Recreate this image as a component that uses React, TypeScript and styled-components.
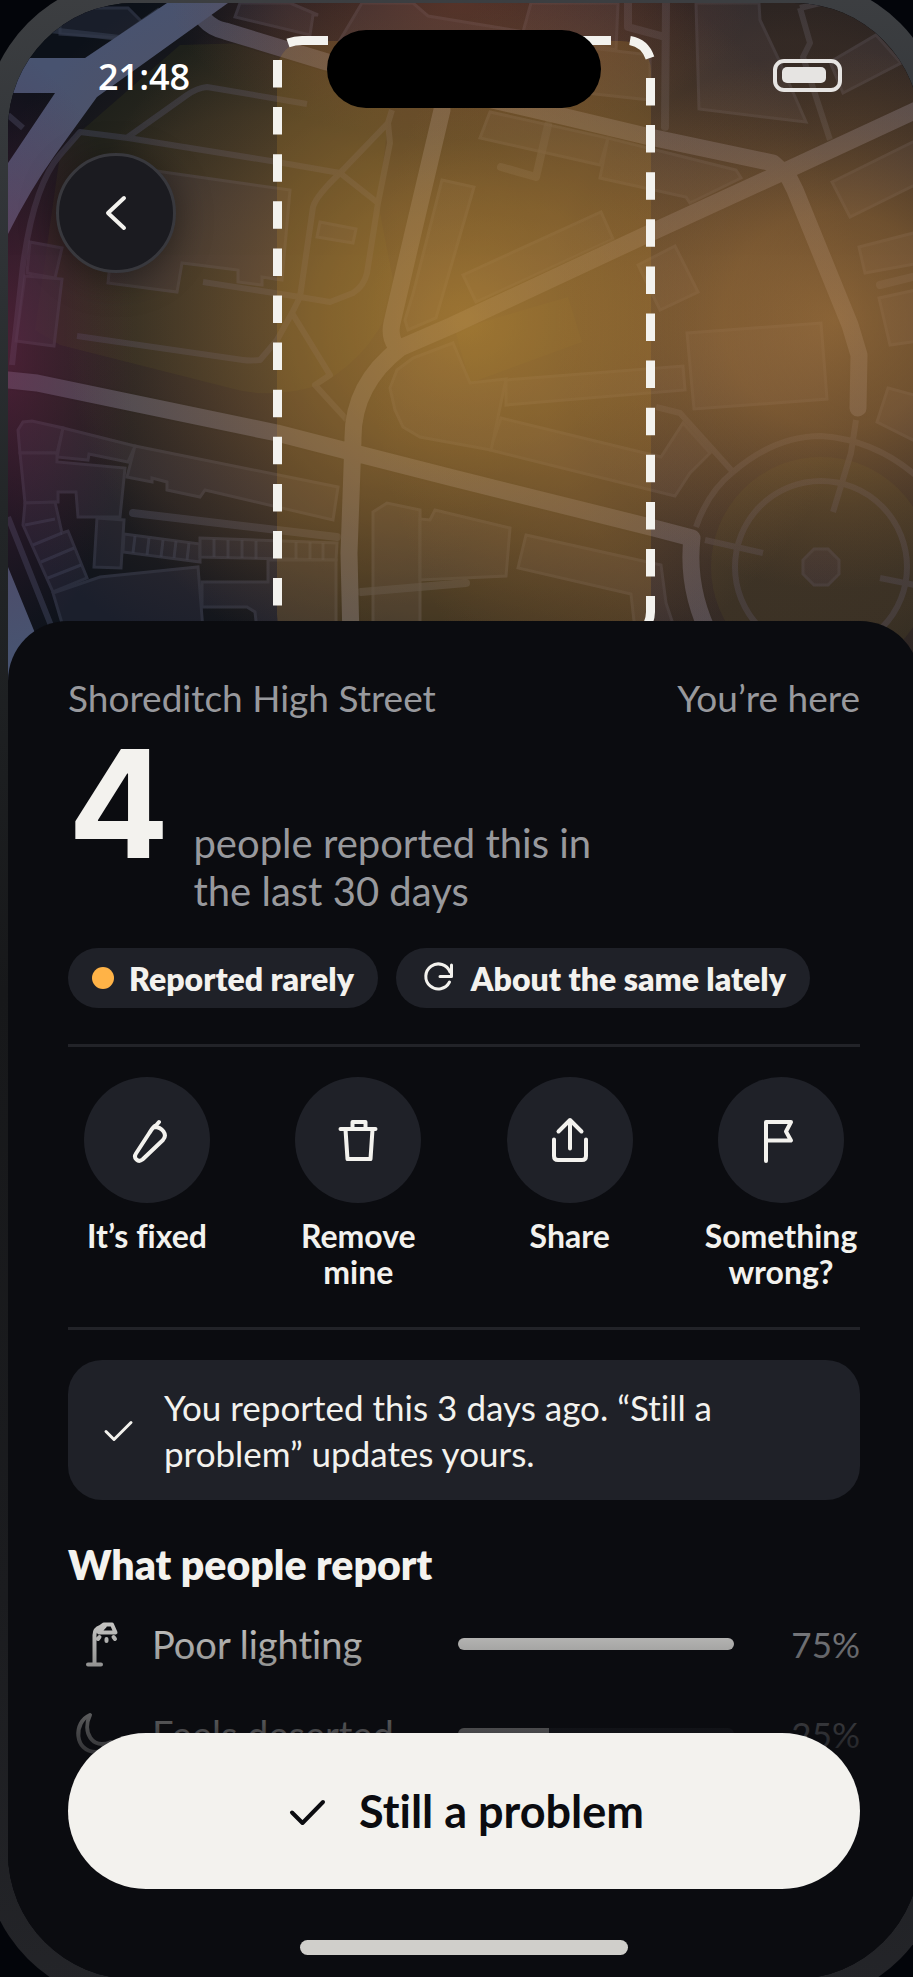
import React from "react";
import styled, { createGlobalStyle } from "styled-components";

const GlobalStyle = createGlobalStyle`
  *, *::before, *::after { box-sizing: border-box; }
  body { margin: 0; background: #03050a; }
  button { font: inherit; color: inherit; border: 0; padding: 0; background: none; cursor: pointer; }
  h1, h2, p, ul { margin: 0; padding: 0; }
`;

const ink = "#f3f2ee";
const muted = "#98999d";
const panel = "#1f2128";
const ground = "#0b0c10";

const Page = styled.div`
  display: flex;
  flex-direction: column;
  min-height: 100vh;
  overflow: hidden;
  color: ${ink};
  font-family: Lato, "Open Sans", sans-serif;
  font-variant-ligatures: none;
`;

const Phone = styled.div`
  flex: 1;
  display: flex;
  margin: -21px -31px -26px -16px;
  padding: 24px;
  border-radius: 150px;
  background: linear-gradient(180deg, #3d3f42 0, #2d3134 15%, #222527 27%, #17181a 50%, #1b1c1f 80%, #242529 100%);
`;

const Screen = styled.main`
  position: relative;
  flex: 1;
  display: flex;
  flex-direction: column;
  min-width: 0;
  overflow: hidden;
  border-radius: 126px;
  background: ${ground};
`;

const MapArea = styled.div`
  height: 690px;
  margin-bottom: -72px;
  svg { display: block; width: 100%; height: 100%; }
`;

const StatusBar = styled.header`
  position: absolute;
  top: 27px;
  left: 0;
  right: 0;
  display: grid;
  grid-template-columns: 1fr 274px 1fr;
  align-items: center;
  height: 78px;
`;

const Clock = styled.time`
  padding-left: 90px;
  padding-top: 16px;
  color: #fff;
  font-family: "Open Sans", sans-serif;
  font-size: 36px;
  font-weight: 600;
  line-height: 52px;
`;

const Island = styled.div`
  height: 78px;
  border-radius: 39px;
  background: #000;
`;

const Battery = styled.div`
  justify-self: end;
  width: 69px;
  height: 33px;
  margin-right: 78px;
  margin-top: 12px;
  padding: 4px 5px;
  border: 4px solid #e6e4e2;
  border-radius: 11px;
`;

const Charge = styled.div`
  width: 44px;
  height: 16px;
  border-radius: 5px;
  background: #e6e4e2;
`;

const BackButton = styled.button`
  position: absolute;
  top: 150px;
  left: 48px;
  display: grid;
  place-items: center;
  width: 120px;
  height: 120px;
  border: 3px solid #38383d;
  border-radius: 50%;
  background: #1b1b20;
  box-shadow: 0 6px 36px rgba(0, 0, 0, 0.4);
`;

const Sheet = styled.section`
  position: relative;
  flex: 1;
  padding: 54px 60px 160px;
  border-radius: 60px 60px 0 0;
  background: ${ground};
`;

const PlaceRow = styled.div`
  display: flex;
  justify-content: space-between;
  color: ${muted};
  font-size: 37px;
  line-height: 46px;
`;

const CountRow = styled.div`
  display: flex;
  align-items: baseline;
  gap: 24px;
  height: 192px;
  margin-top: 11px;
`;

const Count = styled.strong`
  font-family: Inter, sans-serif;
  font-size: 150px;
  font-weight: 700;
  line-height: 144px;
`;

const CountText = styled.p`
  width: 420px;
  color: ${muted};
  font-size: 40px;
  line-height: 48px;
`;

const Chips = styled.ul`
  display: flex;
  gap: 18px;
  margin-top: 24px;
  list-style: none;
`;

const Chip = styled.li`
  display: flex;
  align-items: center;
  height: 60px;
  padding: 0 24px;
  gap: 15px;
  border-radius: 30px;
  background: ${panel};
  font-size: 32px;
  font-weight: 800;
  white-space: nowrap;
`;

const Dot = styled.span`
  width: 22px;
  height: 22px;
  border-radius: 50%;
  background: #ffb347;
`;

const Divider = styled.hr`
  height: 3px;
  margin: 36px 0 30px;
  border: 0;
  background: #222328;
`;

const Actions = styled.div`
  display: grid;
  grid-template-columns: repeat(4, 158px);
  justify-content: space-between;
  min-height: 214px;
`;

const Action = styled.button`
  display: flex;
  flex-direction: column;
  align-items: center;
  justify-content: flex-start;
  gap: 15px;
  font-size: 32px;
  font-weight: 700;
  line-height: 36px;
`;

const ActionDisc = styled.span`
  display: grid;
  place-items: center;
  width: 126px;
  height: 126px;
  border-radius: 50%;
  background: ${panel};
`;

const Notice = styled.div`
  display: flex;
  align-items: center;
  gap: 24px;
  padding: 24px 30px;
  border-radius: 34px;
  background: ${panel};
  font-size: 35px;
  line-height: 46px;
`;

const NoticeText = styled.p`
  max-width: 580px;
`;

const Heading = styled.h2`
  margin-top: 37px;
  font-size: 41px;
  font-weight: 800;
  line-height: 56px;
`;

const Reports = styled.ul`
  list-style: none;
  margin-top: 6px;
`;

const Report = styled.li`
  display: grid;
  grid-template-columns: 60px 282px 276px 1fr;
  align-items: center;
  column-gap: 24px;
  height: 90px;
  font-size: 38px;
`;

const ReportIcon = styled.span`
  display: grid;
  place-items: center;
`;

const Track = styled.span`
  display: block;
  height: 12px;
  overflow: hidden;
  border-radius: 6px;
  background: #24262c;
`;

const Fill = styled.span`
  display: block;
  height: 100%;
  background: ${ink};
`;

const Percent = styled.span`
  color: ${muted};
  font-size: 35px;
  text-align: right;
`;

const Footer = styled.footer`
  position: absolute;
  left: 0;
  right: 0;
  bottom: 0;
  padding: 150px 60px 24px;
  background: linear-gradient(180deg, rgba(11, 12, 16, 0) 0, rgba(11, 12, 16, 0.75) 150px, ${ground} 210px);
`;

const Confirm = styled.button`
  display: flex;
  align-items: center;
  justify-content: center;
  gap: 27px;
  width: 100%;
  height: 156px;
  border-radius: 78px;
  background: ${ink};
  color: ${ground};
  font-size: 45px;
  font-weight: 700;
`;

const HomeBar = styled.div`
  width: 328px;
  height: 15px;
  margin: 51px auto 0;
  border-radius: 8px;
  background: #d0cfcb;
`;

type IconProps = { w: number; h: number; sw?: number; children: React.ReactNode };

const Icon = ({ w, h, sw = 4, children }: IconProps) => (
  <svg width={w} height={h} viewBox={`0 0 ${w} ${h}`} fill="none" stroke="currentColor" strokeWidth={sw} strokeLinecap="round" strokeLinejoin="round" aria-hidden="true">
    {children}
  </svg>
);

const actions = [
  { label: "It’s fixed", icon: <path d="M36 6l-3 3.500c-3 1-5 5-7 8L13 37.500c-3 4.500 2 9.500 6.500 6L40 24c5-5.500-1-13-8.500-13" /> },
  { label: "Remove mine", icon: <path d="M5.500 13h35M17.500 12.500V6h13v6.500M10.500 13.500l2 29.500h23l2-29.500" transform="translate(1 0)" /> },
  { label: "Share", icon: <path d="M24 32.500V4M12.500 15.500L24 4l11.500 11.500M8 23.500V40q0 4 4 4h24q4 0 4-4V23.500" /> },
  { label: "Something wrong?", icon: <path d="M9 45V6h25l-5 9.500 5 9H9" /> },
];

const buildings = [
  "120,165 163,172 290,190 282,280 262,277 262,285 238,282 238,270 182,263 177,292 108,283",
  "320,222 356,229 353,243 317,237",
  "30,242 62,248 55,278 27,273",
  "25,276 62,279 54,346 16,341",
  "240,3 235,17 310,35 313,15 318,15 290,3",
  "362,3 413,3 428,16 525,32 520,40 340,40",
  "442,180 474,187 436,318 408,330 405,320 413,294",
  "490,112 608,138 600,165 480,138",
  "608,138 736,170 741,178 690,203 686,197 600,178",
  "463,275 601,212 613,239 476,302",
  "638,265 675,246 698,292 660,310",
  "832,182 925,136 925,180 850,217",
  "859,247 925,230 925,262 865,273",
  "879,298 925,288 925,340 890,345",
  "696,3 699,109 806,122 778,58 760,20 759,3",
  "830,62 876,35 901,63 843,93",
  "531,3 523,32 616,50 618,3",
  "540,42 650,55 650,100 540,88",
  "687,333 821,323 827,399 694,409",
  "506,380 683,366 685,390 506,405",
  "501,418 661,457 683,423 710,453 690,473 675,496 490,450",
  "453,343 470,383 506,379 491,450 420,437 403,427 395,410 390,388 397,370 413,358",
  "373,512 387,503 420,510 420,630 373,630",
  "420,519 430,520 435,510 510,528 506,576 420,580",
  "526,535 661,565 666,603 675,630 635,630 631,594 518,568",
  "888,388 925,398 925,446 877,422",
  "20,453 18,430 23,422 32,421 63,428 57,453",
  "63,428 135,446 128,462 89,454 88,460 57,457",
  "135,446 338,487 333,520 205,490 200,497 167,490 167,482 152,478 152,482 127,477",
  "20,453 57,453 57,462 125,468 120,517 78,517 76,492 58,492 58,502 25,503",
  "25,503 55,502 62,533 68,531 87,578 53,592 23,525",
  "97,518 124,520 121,568 94,567",
  "124,534 200,544 200,562 123,552",
  "200,538 337,543 336,560 200,557",
  "53,593 100,577 198,567 203,630 64,630",
  "202,582 268,582 268,560 336,560 336,630 257,630 255,612 247,607 202,607",
  "60,8 128,8 142,22 120,38 60,34",
  "814,549 828,549 839,560 839,574 828,585 814,585 803,574 803,560",
];

const lanes =
  "M128 137L187 95Q197 88 207 87L307 104M60 155L80 132L128 138L277 162L340 173M392 110L388 123L340 173Q316 196 313 207L300 297L292 313L277 340L260 360Q250 361 243 360L77 336M388 123L390 143L378 203L367 273Q364 286 353 293L330 302L300 297L203 282M340 173L378 203M292 313L330 375L315 385L347 420M60 155Q34 185 23 265L12 365M8 115L23 128M8 517L52 628M800 8L810 43L803 57L830 140M800 8L820 3M656 407L680 413L733 472Q708 492 696 527M733 472Q775 436 821 436Q880 440 925 484M856 420L851 453L833 512M705 540L763 553M880 578L920 586M50 30L120 38L160 10";

const thickLanes =
  "M133 513L337 537M361 592L466 583M501 167L536 177L548 125M880 285L925 274M666 3L665 127M628 3V27L665 37";

const roads =
  "M205 20Q212 28 225 31L327 62L566 117L650 137L773 163L783 172M925 106L783 172L650 233L453 325L400 348Q352 385 353 440L349 553L351 640M442 110L413 233L392 323Q389 336 396 346M8 380L37 383L277 433L347 451L453 478L650 527L692 538Q686 590 712 640M786 172L795 190L850 325L859 355L858 408";

const dividers =
  "M25 525L55 519M33 545L62 533M41 562L74 548M48 578L81 565M135 536L133 553M149 538L147 555M163 540L161 557M176 541L174 558M189 543L187 560M214 539V557M228 540V558M242 540V558M256 541V559M296 542V559M310 542V559M323 543V560";

const StreetMap = () => (
  <svg viewBox="8 3 912 690" preserveAspectRatio="xMidYMin slice" role="img" aria-label="Map of Shoreditch High Street">
    <defs>
      <radialGradient id="amber">
        <stop offset="0" stopColor="#c08f3d" stopOpacity="0.68" />
        <stop offset="0.35" stopColor="#ba873c" stopOpacity="0.48" />
        <stop offset="0.55" stopColor="#b4803e" stopOpacity="0.33" />
        <stop offset="0.8" stopColor="#aa7840" stopOpacity="0.14" />
        <stop offset="1" stopColor="#a07040" stopOpacity="0" />
      </radialGradient>
      <radialGradient id="amberRight">
        <stop offset="0" stopColor="#bd8640" stopOpacity="0.58" />
        <stop offset="0.4" stopColor="#b9823c" stopOpacity="0.42" />
        <stop offset="0.7" stopColor="#b07c3a" stopOpacity="0.18" />
        <stop offset="1" stopColor="#a07038" stopOpacity="0" />
      </radialGradient>
      <radialGradient id="magenta"><stop offset="0" stopColor="#842a50" stopOpacity="0.5" /><stop offset="0.5" stopColor="#78284a" stopOpacity="0.26" /><stop offset="1" stopColor="#602040" stopOpacity="0" /></radialGradient>
      <radialGradient id="rust"><stop offset="0" stopColor="#9c4c38" stopOpacity="0.44" /><stop offset="0.6" stopColor="#8c4a38" stopOpacity="0.26" /><stop offset="1" stopColor="#804838" stopOpacity="0" /></radialGradient>
      <radialGradient id="haze"><stop offset="0" stopColor="#7a5438" stopOpacity="0.26" /><stop offset="0.6" stopColor="#7a5438" stopOpacity="0.2" /><stop offset="1" stopColor="#704830" stopOpacity="0" /></radialGradient>
    </defs>
    <rect x="8" y="3" width="912" height="690" fill="#0e131b" />
    <g fill="#262d1b" opacity="0.45">
      <path d="M180 45L277 42L392 75L388 123L378 203L395 290Q380 350 320 385Q270 400 230 388L60 345L35 330L60 155L80 132Z" />
      <circle cx="821" cy="567" r="110" />
    </g>
    <path d="M455 330L568 297L582 342L500 372L470 383Z" fill="#2a3018" opacity="0.4" />
    <g opacity="0.72">
      {buildings.map((points) => (
        <polygon key={points} points={points} fill="#212433" stroke="#32384a" strokeWidth="3" />
      ))}
    </g>
    <g opacity="0.66" fill="none" stroke="#333a4d" strokeLinejoin="round">
      <path d={dividers} strokeWidth="3" />
      <path d={lanes} strokeWidth="6" />
      <circle cx="821" cy="567" r="86" strokeWidth="6" />
      <path d={thickLanes} strokeWidth="8" strokeLinecap="round" />
    </g>
    <path d={roads} fill="none" stroke="#0b0f16" strokeWidth="20" opacity="0.3" />
    <path d={roads} fill="none" stroke="#40465a" strokeWidth="17" strokeLinejoin="round" strokeLinecap="round" />
    <path d="M167 3H228L97 97L55 155Q30 190 8 234V163L55 93H8V58H85Z" fill="#485370" />
    <path d="M8 567L35 633L60 693H8Z" fill="#485370" />
    <ellipse cx="250" cy="320" rx="290" ry="340" fill="url(#haze)" />
    <ellipse cx="790" cy="340" rx="420" ry="500" fill="url(#haze)" />
    <ellipse cx="790" cy="340" rx="420" ry="500" fill="url(#haze)" />
    <ellipse cx="460" cy="0" rx="290" ry="140" fill="url(#rust)" />
    <ellipse cx="0" cy="350" rx="135" ry="300" fill="url(#magenta)" />
    <ellipse cx="465" cy="320" rx="400" ry="380" fill="url(#amber)" />
    <ellipse cx="835" cy="320" rx="280" ry="270" fill="url(#amberRight)" />
    <rect x="277" y="41" width="374" height="604" rx="30" fill="#c8922f" opacity="0.2" />
    <g fill="none" stroke="#f3f2ee" strokeWidth="9">
      <path d="M277.500 60V645" strokeDasharray="27.500 19.600" />
      <path d="M288 43Q295 40.500 302 40.500H328" />
      <path d="M580 40.500H611M630 40.500Q645 43 650 58" />
      <path d="M650.500 78V612Q650.500 620 645 630" strokeDasharray="27.500 19.600" />
    </g>
  </svg>
);

export default function App() {
  return (
    <>
      <GlobalStyle />
      <Page>
        <Phone>
          <Screen>
            <MapArea><StreetMap /></MapArea>
            <StatusBar>
              <Clock>21:48</Clock>
              <Island />
              <Battery role="img" aria-label="Battery"><Charge /></Battery>
            </StatusBar>
            <BackButton aria-label="Back">
              <Icon w={36} h={36}><path d="M26 3L10 18l16 15" /></Icon>
            </BackButton>
            <Sheet>
              <PlaceRow><p>Shoreditch High Street</p><p>You’re here</p></PlaceRow>
              <CountRow>
                <Count>4</Count>
                <CountText>people reported this in the last 30 days</CountText>
              </CountRow>
              <Chips>
                <Chip><Dot />Reported rarely</Chip>
                <Chip>
                  <Icon w={36} h={36} sw={3}><path d="M29.500 22A12.500 12.500 0 1 1 30 12M31.500 5V16.500H20" /></Icon>
                  About the same lately
                </Chip>
              </Chips>
              <Divider />
              <Actions>
                {actions.map(({ label, icon }) => (
                  <Action key={label}>
                    <ActionDisc><Icon w={48} h={48}>{icon}</Icon></ActionDisc>
                    {label}
                  </Action>
                ))}
              </Actions>
              <Divider />
              <Notice>
                <Icon w={42} h={42} sw={3}><path d="M8 22.500l8 8L33 13.500" /></Icon>
                <NoticeText>You reported this 3 days ago. “Still a problem” updates yours.</NoticeText>
              </Notice>
              <Heading>What people report</Heading>
              <Reports>
                <Report>
                  <ReportIcon>
                    <Icon w={48} h={48}>
                      <path d="M14 44.500h13M20.500 44V15q0-6 6-8L30 4.500h8l3.500 8H25L31 6M25.500 17l-1.500 2M32.500 19v2M39.500 17l1.500 2" />
                    </Icon>
                  </ReportIcon>
                  <span>Poor lighting</span>
                  <Track><Fill style={{ width: "100%" }} /></Track>
                  <Percent>75%</Percent>
                </Report>
                <Report>
                  <ReportIcon>
                    <Icon w={48} h={48}><path d="M16 5C-1 12 0 42 22 42q10 0 15-10C18 40 8 22 16 5z" /></Icon>
                  </ReportIcon>
                  <span>Feels deserted</span>
                  <Track><Fill style={{ width: "33%" }} /></Track>
                  <Percent>25%</Percent>
                </Report>
              </Reports>
            </Sheet>
            <Footer>
              <Confirm>
                <Icon w={48} h={48}><path d="M8 25.500l10.500 10.500L39 15" /></Icon>
                Still a problem
              </Confirm>
              <HomeBar />
            </Footer>
          </Screen>
        </Phone>
      </Page>
    </>
  );
}
